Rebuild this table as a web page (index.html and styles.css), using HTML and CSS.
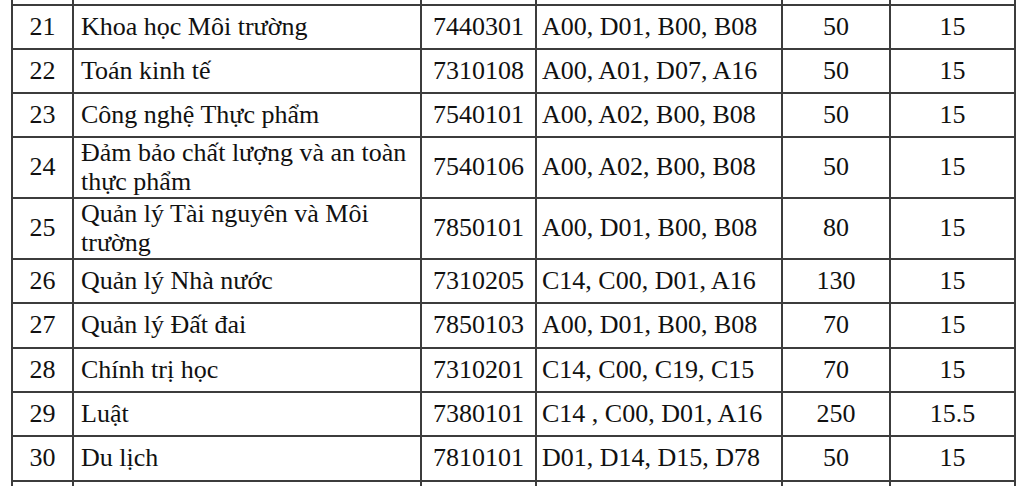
FILE: index.html
```html
<!DOCTYPE html>
<html lang="vi">
<head>
<meta charset="utf-8">
<title>Bảng ngành tuyển sinh</title>
<link rel="stylesheet" href="styles.css">
</head>
<body>
<table class="grid">
  <colgroup>
    <col class="c-stt">
    <col class="c-name">
    <col class="c-code">
    <col class="c-combo">
    <col class="c-quota">
    <col class="c-score">
  </colgroup>
  <tbody>
    <tr class="r"><td class="num">20</td><td class="name">Sư phạm Công nghệ Sinh học</td><td class="num">7510401</td><td class="combo">A00, A02, B00, B08</td><td class="num">50</td><td class="num">15</td></tr>
    <tr class="r"><td class="num">21</td><td class="name">Khoa học Môi trường</td><td class="num">7440301</td><td class="combo">A00, D01, B00, B08</td><td class="num">50</td><td class="num">15</td></tr>
    <tr class="r"><td class="num">22</td><td class="name">Toán kinh tế</td><td class="num">7310108</td><td class="combo">A00, A01, D07, A16</td><td class="num">50</td><td class="num">15</td></tr>
    <tr class="r"><td class="num">23</td><td class="name">Công nghệ Thực phẩm</td><td class="num">7540101</td><td class="combo">A00, A02, B00, B08</td><td class="num">50</td><td class="num">15</td></tr>
    <tr class="r tall"><td class="num">24</td><td class="name">Đảm bảo chất lượng và an toàn thực phẩm</td><td class="num">7540106</td><td class="combo">A00, A02, B00, B08</td><td class="num">50</td><td class="num">15</td></tr>
    <tr class="r tall"><td class="num">25</td><td class="name">Quản lý Tài nguyên và Môi trường</td><td class="num">7850101</td><td class="combo">A00, D01, B00, B08</td><td class="num">80</td><td class="num">15</td></tr>
    <tr class="r"><td class="num">26</td><td class="name">Quản lý Nhà nước</td><td class="num">7310205</td><td class="combo">C14, C00, D01, A16</td><td class="num">130</td><td class="num">15</td></tr>
    <tr class="r r45"><td class="num">27</td><td class="name">Quản lý Đất đai</td><td class="num">7850103</td><td class="combo">A00, D01, B00, B08</td><td class="num">70</td><td class="num">15</td></tr>
    <tr class="r"><td class="num">28</td><td class="name">Chính trị học</td><td class="num">7310201</td><td class="combo">C14, C00, C19, C15</td><td class="num">70</td><td class="num">15</td></tr>
    <tr class="r"><td class="num">29</td><td class="name">Luật</td><td class="num">7380101</td><td class="combo">C14 , C00, D01, A16</td><td class="num">250</td><td class="num">15.5</td></tr>
    <tr class="r r45"><td class="num">30</td><td class="name">Du lịch</td><td class="num">7810101</td><td class="combo">D01, D14, D15, D78</td><td class="num">50</td><td class="num">15</td></tr>
    <tr class="r"><td class="num">31</td><td class="name">Công tác xã hội</td><td class="num">7760101</td><td class="combo">C00, D01, C19, C15</td><td class="num">50</td><td class="num">15</td></tr>
  </tbody>
</table>
</body>
</html>
```

FILE: styles.css
```css
html, body {
  margin: 0;
  padding: 0;
  background: #ffffff;
  overflow: hidden;
  height: 486px;
}

.grid {
  margin: -40px 0 0 11px;
  border-collapse: collapse;
  table-layout: fixed;
  width: 1003px;
  font-family: "Liberation Serif", "Times New Roman", serif;
  font-size: 26px;
  line-height: 28.5px;
  color: #111111;
}

.c-stt { width: 61px; }
.c-name { width: 348px; }
.c-code { width: 115px; }
.c-combo { width: 246px; }
.c-quota { width: 108px; }
.c-score { width: 125px; }

.grid td {
  border: 2px solid #3c3c3c;
  padding: 0;
  vertical-align: middle;
}

.r { height: 44px; }
.r.r45 { height: 45px; }
.r.tall { height: 61px; }

.num { text-align: center; }
.grid td.name { text-align: left; padding-left: 7px; padding-right: 4px; }
.grid td.combo { text-align: left; padding-left: 5px; }
```
